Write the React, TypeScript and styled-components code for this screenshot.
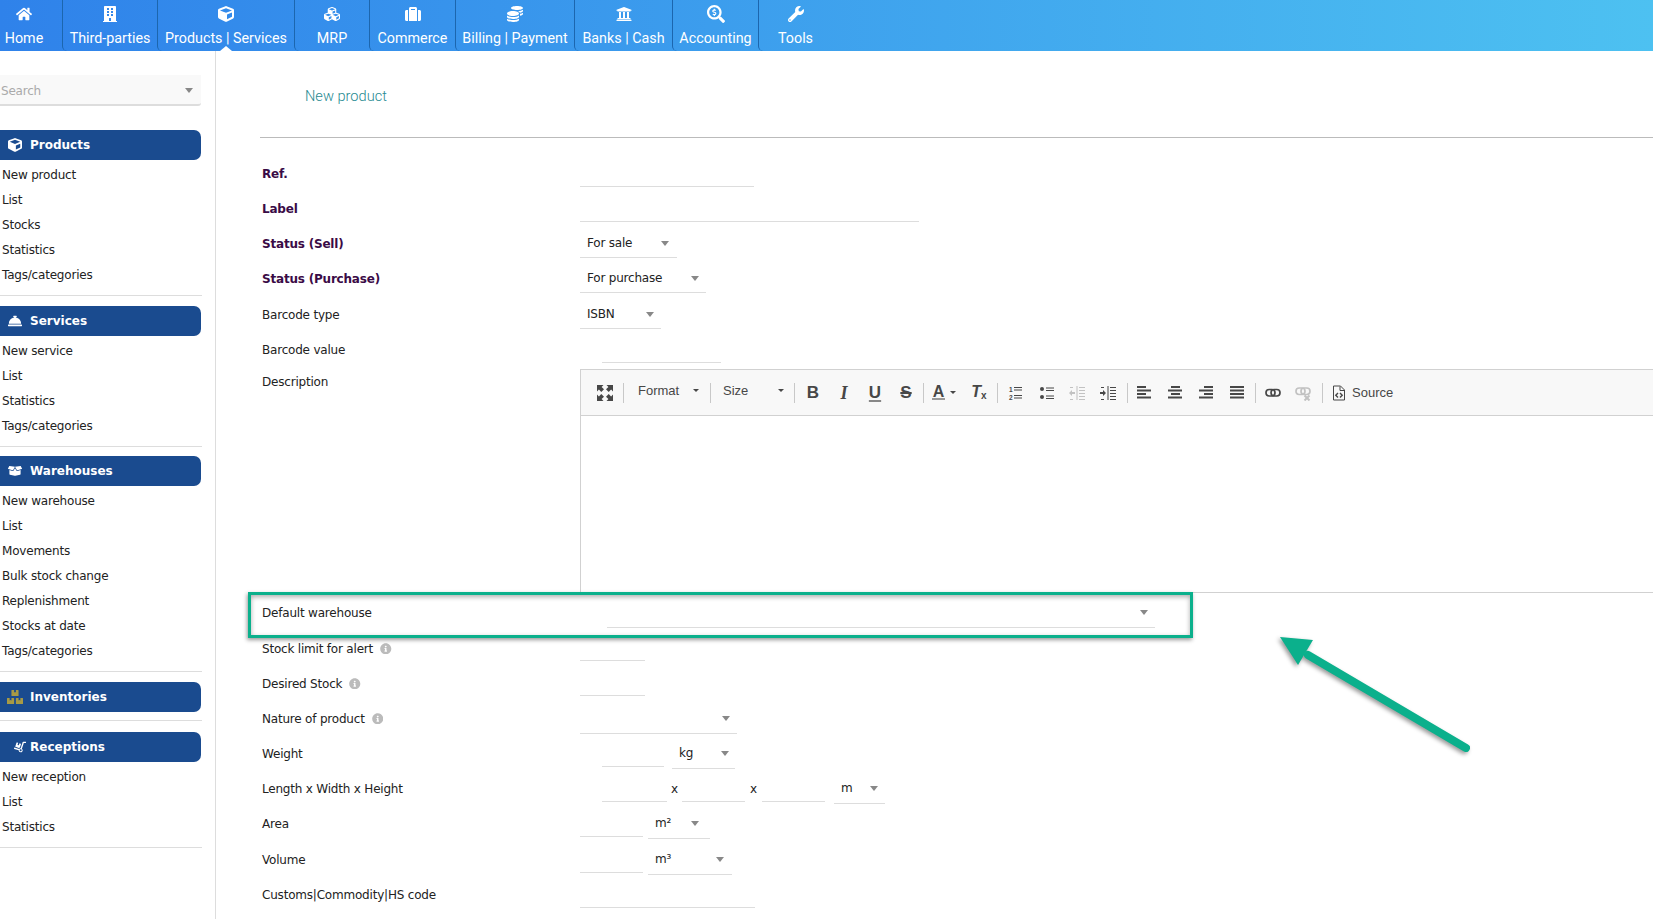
import React from "react";
import styled, { createGlobalStyle } from "styled-components";
import {
  FaHome, FaBuilding, FaCube, FaCubes, FaSuitcase, FaCoins, FaUniversity,
  FaSearchDollar, FaWrench, FaConciergeBell, FaBoxOpen, FaBoxes, FaDolly, FaInfoCircle,
} from "react-icons/fa";

const Global = createGlobalStyle`
  html, body { margin: 0; padding: 0; width: 1653px; height: 919px; overflow: hidden; background: #fff; }
  body { font-family: "DejaVu Sans", Verdana, sans-serif; font-size: 12px; letter-spacing: -0.2px; color: #222; }
  * { box-sizing: border-box; }
`;

const Page = styled.div`
  position: relative;
  width: 1653px;
  height: 919px;
  overflow: hidden;
  display: flex;
  flex-direction: column;
`;

/* ---------- top bar ---------- */
const TopBar = styled.nav`
  height: 51px;
  flex: none;
  display: flex;
  background: linear-gradient(90deg, #2f82ea 0%, #4dc1f1 100%);
`;
const NavItem = styled.div<{ $w: number; $first?: boolean; $active?: boolean }>`
  position: relative;
  width: ${(p) => p.$w}px;
  flex: none;
  display: flex;
  flex-direction: column;
  align-items: center;
  padding-right: ${(p) => (p.$first ? 14 : 0)}px;
  border-left: ${(p) => (p.$first ? "none" : "1.5px solid #1c66ae")};
  border-bottom-left-radius: 5px;
  color: #fff;
  font-family: Roboto, sans-serif;
  font-size: 14.3px;
  letter-spacing: 0;
  &::after {
    content: "";
    display: ${(p) => (p.$active ? "block" : "none")};
    position: absolute;
    left: 50%;
    bottom: 0;
    margin-left: -6px;
    border-left: 6px solid transparent;
    border-right: 6px solid transparent;
    border-bottom: 5px solid #fff;
  }
`;
const NavIcon = styled.span<{ $size?: number }>`
  height: 27px;
  display: flex;
  align-items: center;
  font-size: ${(p) => p.$size ?? 16}px;
`;
const NavText = styled.span`
  line-height: 22px;
  white-space: nowrap;
`;

/* ---------- page body ---------- */
const Body = styled.div`
  flex: 1;
  display: flex;
  min-height: 0;
`;
const Side = styled.aside`
  width: 216px;
  flex: none;
  border-right: 1px solid #ddd;
  padding-top: 24px;
`;
const SearchBox = styled.div`
  width: 201px;
  height: 31px;
  background: #f9f9f9;
  border-bottom: 2px solid #ddd;
  border-radius: 0 0 3px 0;
  padding: 2px 8px 0 1px;
  display: flex;
  align-items: center;
  justify-content: space-between;
  color: #aaa;
  margin-bottom: 23.5px;
`;
const Caret = styled.i`
  flex: none;
  width: 0;
  height: 0;
  border-left: 4px solid transparent;
  border-right: 4px solid transparent;
  border-top: 5px solid #888;
`;
const Group = styled.section<{ $after: number }>`
  width: 202px;
  padding-bottom: 8px;
  border-bottom: 1px solid #ddd;
  margin-bottom: ${(p) => p.$after}px;
`;
const GroupBar = styled.div`
  width: 201px;
  height: 30px;
  background: #1a4b8f;
  border-radius: 0 7px 7px 0;
  display: flex;
  align-items: center;
  color: #fff;
  font-weight: 700;
  font-size: 12px;
  letter-spacing: 0;
`;
const GroupIcon = styled.span<{ $c?: string; $size?: number; $ml?: number; $flip?: boolean }>`
  width: 30px;
  flex: none;
  display: flex;
  justify-content: center;
  padding-left: ${(p) => p.$ml ?? 0}px;
  font-size: ${(p) => p.$size ?? 14}px;
  color: ${(p) => p.$c ?? "#fff"};
  svg {
    transform: ${(p) => (p.$flip ? "scaleX(-1)" : "none")};
  }
`;
const ItemList = styled.ul`
  list-style: none;
  margin: 2px 0 0;
  padding: 0;
`;
const Item = styled.li`
  height: 25px;
  line-height: 27px;
  padding-left: 2px;
`;

/* ---------- main ---------- */
const Main = styled.main`
  flex: 1;
  min-width: 0;
  padding-left: 44px;
`;
const TitleBar = styled.header`
  height: 87px;
  border-bottom: 1px solid #bbb;
  padding: 33px 0 0 45px;
  margin-bottom: 18.5px;
`;
const Title = styled.h1`
  margin: 0;
  font-family: Roboto, sans-serif;
  font-weight: 300;
  font-size: 14.6px;
  letter-spacing: 0;
  line-height: 24px;
  color: #1f8a91;
`;
const Row = styled.div<{ $mt?: number }>`
  height: 35px;
  margin-top: ${(p) => p.$mt ?? 0}px;
  display: grid;
  grid-template-columns: 320px 1fr;
  align-items: stretch;
`;
const Label = styled.div<{ $bold?: boolean }>`
  padding-left: 2px;
  display: flex;
  align-items: center;
  font-weight: ${(p) => (p.$bold ? 700 : 400)};
  color: ${(p) => (p.$bold ? "#3a0b46" : "#222")};
  white-space: nowrap;
`;
const Hint = styled.span`
  display: inline-flex;
  margin-left: 7px;
  font-size: 11.5px;
  color: #bbb;
`;
const Fields = styled.div<{ $ml?: number }>`
  display: flex;
  align-items: stretch;
  padding-left: ${(p) => p.$ml ?? 0}px;
`;
const Input = styled.div<{ $w: number; $ml?: number; $mb?: number }>`
  width: ${(p) => p.$w}px;
  margin-left: ${(p) => p.$ml ?? 0}px;
  margin-bottom: ${(p) => p.$mb ?? 4.5}px;
  flex: none;
  border-bottom: 1px solid #ddd;
`;
const Select = styled.div<{ $w: number; $ml?: number; $pr?: number; $mb?: number }>`
  width: ${(p) => p.$w}px;
  margin-left: ${(p) => p.$ml ?? 0}px;
  margin-bottom: ${(p) => p.$mb ?? 2.5}px;
  flex: none;
  border-bottom: 1px solid #ddd;
  padding: 3px ${(p) => p.$pr ?? 7}px 0 7px;
  display: flex;
  align-items: center;
  justify-content: space-between;
`;
const Times = styled.span<{ $w: number }>`
  width: ${(p) => p.$w}px;
  flex: none;
  display: flex;
  align-items: center;
  justify-content: center;
`;

/* ---------- editor ---------- */
const EditorRow = styled.div`
  margin-top: 1.5px;
  height: 224px;
  display: grid;
  grid-template-columns: 320px 1fr;
`;
const DescLabel = styled.div`
  padding: 5px 0 0 2px;
  line-height: 17px;
`;
const Editor = styled.div`
  border: 1px solid #d1d1d1;
  border-right: none;
`;
const Toolbar = styled.div`
  height: 46px;
  background: #f8f8f8;
  border-bottom: 1px solid #d1d1d1;
  display: flex;
  align-items: center;
  color: #474747;
  font-family: "Liberation Sans", Arial, sans-serif;
  letter-spacing: 0;
`;
const ToolGroup = styled.div<{ $pl?: number; $pr?: number; $w?: number }>`
  display: flex;
  align-items: center;
  flex: none;
  width: ${(p) => (p.$w ? `${p.$w}px` : "auto")};
  padding-left: ${(p) => p.$pl ?? 0}px;
  padding-right: ${(p) => p.$pr ?? 0}px;
`;
const Sep = styled.span`
  width: 1px;
  height: 20px;
  flex: none;
  background: #c8c8c8;
`;
const Tool = styled.span<{ $w: number; $off?: boolean }>`
  width: ${(p) => p.$w}px;
  height: 24px;
  flex: none;
  display: flex;
  align-items: center;
  justify-content: center;
  opacity: ${(p) => (p.$off ? 0.3 : 1)};
`;
const Combo = styled.span<{ $w: number; $pl: number; $pr: number }>`
  width: ${(p) => p.$w}px;
  flex: none;
  padding: 0 ${(p) => p.$pr}px 4px ${(p) => p.$pl}px;
  display: flex;
  align-items: center;
  justify-content: space-between;
  font-size: 13px;
`;
const MiniCaret = styled.i<{ $ml?: number }>`
  flex: none;
  width: 0;
  height: 0;
  margin-left: ${(p) => p.$ml ?? 0}px;
  border-left: 3px solid transparent;
  border-right: 3px solid transparent;
  border-top: 3px solid #474747;
`;
const Glyph = styled.span`
  font-size: 17px;
  line-height: 16px;
  font-weight: 700;
  color: #474747;
`;
const GlyphI = styled(Glyph)`
  font-style: italic;
  font-family: "Liberation Serif", serif;
  font-size: 18px;
`;
const GlyphT = styled(Glyph)`
  font-style: italic;
  font-size: 16px;
`;
const GlyphU = styled(Glyph)`
  text-decoration: underline;
  text-underline-offset: 2px;
  text-decoration-thickness: 1.5px;
  text-decoration-color: #888;
`;
const GlyphS = styled(Glyph)`
  text-decoration: line-through;
  text-decoration-thickness: 1.5px;
`;
const GlyphA = styled(Glyph)`
  font-size: 16px;
  border-bottom: 2.5px solid #999;
  line-height: 13px;
  padding: 0 1px;
`;
const GlyphSub = styled.span`
  font-size: 10px;
  font-style: normal;
  position: relative;
  top: 2px;
`;
const ToolText = styled.span`
  font-size: 13px;
  margin-left: 5px;
`;
const Surface = styled.div`
  height: 176px;
`;

/* ---------- annotation ---------- */
const HighlightBox = styled.div`
  position: absolute;
  left: 248px;
  top: 592px;
  width: 945px;
  height: 46px;
  border: 3px solid #0bb08c;
  box-shadow: -1px 2px 4px rgba(0, 0, 0, 0.4), inset 0 2px 5px rgba(0, 0, 0, 0.32);
  pointer-events: none;
`;
const ArrowSvg = styled.svg`
  position: absolute;
  left: 1270px;
  top: 630px;
  overflow: visible;
  filter: drop-shadow(-1.5px 2px 2px rgba(0, 0, 0, 0.4));
`;

/* ---------- toolbar drawings ---------- */
const Ico = ({ children, w = 16, h = 16 }: { children: React.ReactNode; w?: number; h?: number }) => (
  <svg width={w} height={h} viewBox={`0 0 ${w} ${h}`} fill="#474747">{children}</svg>
);
const Lines = ({ rows }: { rows: [number, number, number, number?][] }) => (
  <>
    {rows.map(([x, y, w, hh], i) => (
      <rect key={i} x={x} y={y} width={w} height={hh ?? 2} />
    ))}
  </>
);
const IconMax = () => (
  <Ico>
    <path d="M0 0h6.5L4.6 1.9 7 4.3 4.3 7 1.9 4.6 0 6.5zM16 0v6.5l-1.9-1.9L11.7 7 9 4.3l2.4-2.4L9.5 0zM0 16V9.5l1.9 1.9L4.3 9 7 11.7l-2.4 2.4L6.5 16zM16 16H9.5l1.9-1.9L9 11.7 11.7 9l2.4 2.4L16 9.5z" />
  </Ico>
);
const IconNum = () => (
  <Ico>
    <text x="1" y="7" fontSize="6.5" fontFamily="Liberation Sans" fontWeight="700">1</text>
    <text x="1" y="15" fontSize="6.5" fontFamily="Liberation Sans" fontWeight="700">2</text>
    <Lines rows={[[6, 2, 8, 1], [6, 4.5, 8, 1], [6, 10, 8, 1], [6, 12.5, 8, 1]]} />
  </Ico>
);
const IconBullet = () => (
  <Ico>
    <circle cx="3" cy="4" r="2" />
    <circle cx="3" cy="12" r="2" />
    <Lines rows={[[7, 2.5, 8, 1], [7, 5, 8, 1], [7, 10.5, 8, 1], [7, 13, 8, 1]]} />
  </Ico>
);
const IconIndent = ({ out }: { out?: boolean }) => (
  <Ico>
    <rect x="7.5" y="1" width="1" height="14" />
    <Lines rows={[[10, 2, 6, 1], [10, 5, 6, 1], [10, 8, 6, 1], [10, 11, 6, 1], [10, 14, 6, 1], [1, 2, 3, 1], [1, 14, 3, 1]]} />
    {out ? <path d="M0 8l3-3v2h3v2H3v2z" /> : <path d="M6 8L3 5v2H0v2h3v2z" />}
  </Ico>
);
const IconAlign = ({ kind }: { kind: "l" | "c" | "r" | "j" }) => {
  const short = 9;
  const x = kind === "l" ? 1 : kind === "c" ? 4 : kind === "r" ? 6 : 1;
  const w = kind === "j" ? 14 : short;
  return (
    <Ico>
      <Lines rows={[[x, 1, w], [1, 4.5, 14], [x, 8, w], [1, 11.5, 14]]} />
    </Ico>
  );
};
const IconLink = () => (
  <Ico>
    <g fill="none" stroke="#474747" strokeWidth="1.7">
      <rect x="1" y="4.5" width="9" height="6.5" rx="3.2" />
      <rect x="6" y="4.5" width="9" height="6.5" rx="3.2" />
    </g>
  </Ico>
);
const IconUnlink = () => (
  <Ico>
    <g fill="none" stroke="#474747" strokeWidth="1.7">
      <rect x="1" y="3" width="9" height="6.5" rx="3.2" />
      <rect x="6" y="3" width="9" height="6.5" rx="3.2" />
      <path d="M9.5 10.5l5 5M14.5 10.5l-5 5" strokeWidth="2" />
    </g>
  </Ico>
);
const IconSource = () => (
  <Ico>
    <path d="M2.5 1h7l4 4v10h-11z M9 1.5V5.5h4" fill="none" stroke="#474747" strokeWidth="1" />
    <path d="M7 8L4.8 10.2 7 12.4M9 8l2.2 2.2L9 12.4" fill="none" stroke="#474747" strokeWidth="1.4" />
  </Ico>
);

const nav = [
  { t: "Home", w: 62, I: FaHome, first: true },
  { t: "Third-parties", w: 95, I: FaBuilding },
  { t: "Products | Services", w: 137, I: FaCube, active: true },
  { t: "MRP", w: 75, I: FaCubes },
  { t: "Commerce", w: 86, I: FaSuitcase },
  { t: "Billing | Payment", w: 119, I: FaCoins },
  { t: "Banks | Cash", w: 98, I: FaUniversity },
  { t: "Accounting", w: 86, I: FaSearchDollar, size: 18 },
];

export default function App() {
  return (
    <Page>
      <Global />
      <TopBar>
        {nav.map(({ t, w, I, first, active, size }) => (
          <NavItem key={t} $w={w} $first={first} $active={active}>
            <NavIcon $size={size}><I /></NavIcon>
            <NavText>{t}</NavText>
          </NavItem>
        ))}
        <NavItem $w={74}>
          <NavIcon><FaWrench /></NavIcon>
          <NavText>Tools</NavText>
        </NavItem>
      </TopBar>
      <Body>
        <Side>
          <SearchBox>Search<Caret /></SearchBox>
          <Group $after={10}>
            <GroupBar><GroupIcon><FaCube /></GroupIcon>Products</GroupBar>
            <ItemList>
              {["New product", "List", "Stocks", "Statistics", "Tags/categories"].map((s) => <Item key={s}>{s}</Item>)}
            </ItemList>
          </Group>
          <Group $after={9}>
            <GroupBar><GroupIcon><FaConciergeBell /></GroupIcon>Services</GroupBar>
            <ItemList>
              {["New service", "List", "Statistics", "Tags/categories"].map((s) => <Item key={s}>{s}</Item>)}
            </ItemList>
          </Group>
          <Group $after={10}>
            <GroupBar><GroupIcon><FaBoxOpen /></GroupIcon>Warehouses</GroupBar>
            <ItemList>
              {["New warehouse", "List", "Movements", "Bulk stock change", "Replenishment", "Stocks at date", "Tags/categories"].map((s) => <Item key={s}>{s}</Item>)}
            </ItemList>
          </Group>
          <Group $after={11}>
            <GroupBar><GroupIcon $c="#a89a45" $size={16}><FaBoxes /></GroupIcon>Inventories</GroupBar>
          </Group>
          <Group $after={0}>
            <GroupBar><GroupIcon $ml={10} $size={12} $flip><FaDolly /></GroupIcon>Receptions</GroupBar>
            <ItemList>
              {["New reception", "List", "Statistics"].map((s) => <Item key={s}>{s}</Item>)}
            </ItemList>
          </Group>
        </Side>
        <Main>
          <TitleBar><Title>New product</Title></TitleBar>
          <Row><Label $bold>Ref.</Label><Fields><Input $w={174} /></Fields></Row>
          <Row><Label $bold>Label</Label><Fields><Input $w={339} /></Fields></Row>
          <Row><Label $bold>Status (Sell)</Label><Fields><Select $w={97} $pr={8} $mb={3.5}>For sale<Caret /></Select></Fields></Row>
          <Row><Label $bold>Status (Purchase)</Label><Fields><Select $w={126} $mb={3.5}>For purchase<Caret /></Select></Fields></Row>
          <Row $mt={1}><Label>Barcode type</Label><Fields><Select $w={81} $mb={3.5}>ISBN<Caret /></Select></Fields></Row>
          <Row><Label>Barcode value</Label><Fields><Input $w={119} $ml={22} /></Fields></Row>
          <EditorRow>
            <DescLabel>Description</DescLabel>
            <Editor>
              <Toolbar>
                <ToolGroup $pl={9} $pr={3}><Tool $w={30}><IconMax /></Tool></ToolGroup>
                <Sep />
                <Combo $w={86} $pl={14} $pr={11}>Format<MiniCaret /></Combo>
                <Sep />
                <Combo $w={83} $pl={12} $pr={10}>Size<MiniCaret /></Combo>
                <Sep />
                <ToolGroup $pl={2.5} $pr={1.5}>
                  <Tool $w={31}><Glyph>B</Glyph></Tool>
                  <Tool $w={31}><GlyphI>I</GlyphI></Tool>
                  <Tool $w={31}><GlyphU>U</GlyphU></Tool>
                  <Tool $w={31}><GlyphS>S</GlyphS></Tool>
                </ToolGroup>
                <Sep />
                <ToolGroup $w={73}>
                  <Tool $w={40}><GlyphA>A</GlyphA><MiniCaret $ml={5} /></Tool>
                  <Tool $w={30}><GlyphT>T<GlyphSub>x</GlyphSub></GlyphT></Tool>
                </ToolGroup>
                <Sep />
                <ToolGroup $pl={2.7} $pr={3.7}>
                  <Tool $w={30.67}><IconNum /></Tool>
                  <Tool $w={30.67}><IconBullet /></Tool>
                  <Tool $w={30.67} $off><IconIndent out /></Tool>
                  <Tool $w={30.67}><IconIndent /></Tool>
                </ToolGroup>
                <Sep />
                <ToolGroup $pl={0.5} $pr={2.5}>
                  <Tool $w={31}><IconAlign kind="l" /></Tool>
                  <Tool $w={31}><IconAlign kind="c" /></Tool>
                  <Tool $w={31}><IconAlign kind="r" /></Tool>
                  <Tool $w={31}><IconAlign kind="j" /></Tool>
                </ToolGroup>
                <Sep />
                <ToolGroup $pl={2} $pr={4}>
                  <Tool $w={30}><IconLink /></Tool>
                  <Tool $w={30} $off><IconUnlink /></Tool>
                </ToolGroup>
                <Sep />
                <ToolGroup $pl={8}><IconSource /><ToolText>Source</ToolText></ToolGroup>
              </Toolbar>
              <Surface />
            </Editor>
          </EditorRow>
          <Row $mt={2}><Label>Default warehouse</Label><Fields><Select $w={548} $ml={27}><span /><Caret /></Select></Fields></Row>
          <Row $mt={1}><Label>Stock limit for alert<Hint><FaInfoCircle /></Hint></Label><Fields><Input $w={65} $mb={5.5} /></Fields></Row>
          <Row><Label>Desired Stock<Hint><FaInfoCircle /></Hint></Label><Fields><Input $w={65} $mb={5.5} /></Fields></Row>
          <Row><Label>Nature of product<Hint><FaInfoCircle /></Hint></Label><Fields><Select $w={157}><span /><Caret /></Select></Fields></Row>
          <Row><Label>Weight</Label><Fields><Input $w={62} $ml={22} /><Select $w={63} $ml={8} $pr={6}>kg<Caret /></Select></Fields></Row>
          <Row>
            <Label>Length x Width x Height</Label>
            <Fields>
              <Input $w={65} $ml={22} /><Times $w={15}>x</Times>
              <Input $w={63} /><Times $w={17}>x</Times>
              <Input $w={63} /><Select $w={51} $ml={9}>m<Caret /></Select>
            </Fields>
          </Row>
          <Row><Label>Area</Label><Fields><Input $w={63} /><Select $w={62} $ml={5} $pr={11}>m²<Caret /></Select></Fields></Row>
          <Row $mt={1}><Label>Volume</Label><Fields><Input $w={63} /><Select $w={84} $ml={5} $pr={8}>m³<Caret /></Select></Fields></Row>
          <Row><Label>Customs|Commodity|HS code</Label><Fields><Input $w={175} /></Fields></Row>
        </Main>
      </Body>
      <HighlightBox />
      <ArrowSvg width="200" height="130" viewBox="0 0 200 130">
        <path d="M38 25L196 118" stroke="#0bb08c" strokeWidth="8" strokeLinecap="round" />
        <path d="M10 7L43 10 28 35z" fill="#0bb08c" />
      </ArrowSvg>
    </Page>
  );
}
